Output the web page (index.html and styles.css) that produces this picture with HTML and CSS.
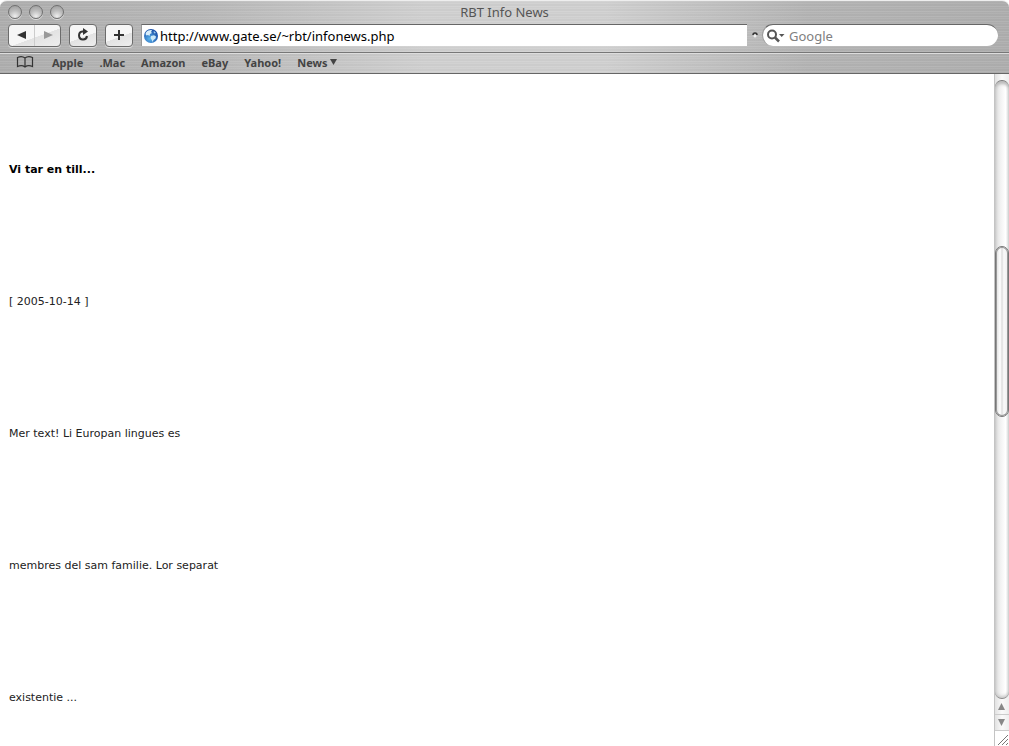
FILE: index.html
```html
<!DOCTYPE html>
<html lang="sv">
<head>
    <meta charset="UTF-8">
    <meta name="viewport" content="width=device-width, initial-scale=1.0">
    <title>RBT Info News</title>
    <link rel="stylesheet" href="styles.css">
</head>
<body>
    <div class="window">
        <header class="chrome">
            <div class="titleBar">
                <div class="lights">
                    <button type="button" class="light" aria-label="Close"></button>
                    <button type="button" class="light" aria-label="Minimize"></button>
                    <button type="button" class="light" aria-label="Zoom"></button>
                </div>
                <h1>RBT Info News</h1>
            </div>
            <form class="toolbar">
                <div class="navButtons">
                    <button type="button" class="navButton" aria-label="Back">
                        <svg width="10" height="10" viewBox="0 0 10 10"><path d="M9 1v8L0 5z" fill="#333"/></svg>
                    </button>
                    <button type="button" class="navButton" aria-label="Forward">
                        <svg width="10" height="10" viewBox="0 0 10 10"><path d="M1 1v8l9-4z" fill="#999"/></svg>
                    </button>
                </div>
                <button type="button" class="toolButton" aria-label="Reload">
                    <svg width="14" height="14" viewBox="0 0 14 14"><path d="M8 3.500H6.500A4 4 0 1 0 11 8" fill="none" stroke="#333" stroke-width="2"/><path d="M7 0l5 3.500L7 7z" fill="#333"/></svg>
                </button>
                <button type="button" class="toolButton" aria-label="Add bookmark">
                    <svg width="12" height="12" viewBox="0 0 12 12"><path d="M6 1v10M1 6h10" stroke="#333" stroke-width="2"/></svg>
                </button>
                <div class="address">
                    <svg width="14" height="14" viewBox="0 0 14 14">
                        <defs>
                            <radialGradient id="sea" cx="40%" cy="70%" r="65%">
                                <stop offset="0" stop-color="#5bb4ec"/>
                                <stop offset="1" stop-color="#1a50a8"/>
                            </radialGradient>
                        </defs>
                        <circle cx="7" cy="7" r="7" fill="url(#sea)"/>
                        <path d="M2 3.500C3.500 1.500 6 .8 8 1.200L7 3l1 1-2 1-.5 2L4 6 2.500 6.500 1.500 5z" fill="#d9eefa"/>
                        <path d="M7 7l3-.8 2 1.300-.5 2-2 1.500L8.500 13 7.500 10.500 6.500 9z" fill="#cbe8f8"/>
                        <path d="M10 2l2 2-1.500.5L9.500 3z" fill="#9fcdf0"/>
                    </svg>
                    <input type="text" class="addressInput" aria-label="Address" value="http://www.gate.se/~rbt/infonews.php">
                </div>
                <svg class="divider" width="6" height="6" viewBox="0 0 6 6"><path d="M1 3a2 2 0 0 1 4 0" fill="none" stroke="#333" stroke-width="1.500"/><circle cx="3" cy="4" r="1.500" fill="#eee"/></svg>
                <div class="search">
                    <svg width="18" height="14" viewBox="0 0 18 14"><circle cx="5" cy="5.500" r="4" fill="none" stroke="#555" stroke-width="2"/><path d="M8 8.500l4 4" stroke="#555" stroke-width="2.500"/><path d="M12 5h5.500L14.700 8z" fill="#555"/></svg>
                    <input type="text" class="searchInput" aria-label="Search Google" placeholder="Google">
                </div>
            </form>
            <nav class="bookmarks">
                <a href="#" class="book" aria-label="Bookmarks">
                    <svg width="18" height="12" viewBox="0 0 18 12"><path d="M9 2C7 .4 4 .4 1.500 1.500V10.500C4 9.500 7 9.500 9 11C11 9.500 14 9.500 16.500 10.500V1.500C14 .4 11 .4 9 2V11" fill="none" stroke="#333" stroke-width="1.200"/></svg>
                </a>
                <a href="#">Apple</a>
                <a href="#">.Mac</a>
                <a href="#">Amazon</a>
                <a href="#">eBay</a>
                <a href="#">Yahoo!</a>
                <a href="#">News <svg width="7" height="6" viewBox="0 0 7 6"><path d="M0 0h7L3.500 6z" fill="#444"/></svg></a>
            </nav>
        </header>
        <div class="view">
            <main class="page">
                <p><strong>Vi tar en till...</strong></p>
                <p>[ 2005-10-14 ]</p>
                <p>Mer text! Li Europan lingues es</p>
                <p>membres del sam familie. Lor separat</p>
                <p>existentie ...</p>
            </main>
            <div class="scrollbar">
                <div class="track">
                    <div class="thumb"></div>
                </div>
                <button type="button" class="arrow" aria-label="Scroll up">
                    <svg width="7" height="7" viewBox="0 0 7 7"><path d="M3.500 0L7 7H0z" fill="#888"/></svg>
                </button>
                <button type="button" class="arrow" aria-label="Scroll down">
                    <svg width="7" height="7" viewBox="0 0 7 7"><path d="M0 0h7L3.500 7z" fill="#888"/></svg>
                </button>
                <div class="grip">
                    <svg width="12" height="12" viewBox="0 0 12 12"><path d="M1 11L11 1M5 11l6-6M9 11l2-2" stroke="#777" stroke-width="1"/></svg>
                </div>
            </div>
        </div>
    </div>
</body>
</html>
```
FILE: styles.css
```css
* {
    margin: 0;
    padding: 0;
    box-sizing: border-box;
}

body {
    font-family: "Noto Sans", sans-serif;
    background: #fff;
    color: #222;
    height: 100vh;
    overflow: hidden;
}

svg {
    display: block;
    flex: none;
}

button {
    border: none;
    background: none;
}

.window {
    display: flex;
    flex-direction: column;
    height: 100%;
}

/* brushed metal */
.chrome {
    background:
        repeating-linear-gradient(rgba(255, 255, 255, 0.08) 0 1px, rgba(0, 0, 0, 0.01) 1px 2px, rgba(255, 255, 255, 0.04) 2px 3px, rgba(0, 0, 0, 0.02) 3px 5px),
        linear-gradient(90deg, #aeaeae, #b8b8b8 20%, #d0d0d0 42%, #d0d0d0 60%, #b4b4b4 80%, #aeaeae);
    border-top: 1px solid #eee;
    border-bottom: 1px solid #666;
    border-radius: 7px 7px 0 0;
}

.titleBar {
    display: grid;
    grid-template-columns: 1fr auto 1fr;
    align-items: center;
    height: 22px;
    padding: 0 8px;
}

.lights {
    display: flex;
    gap: 7px;
}

.light {
    width: 14px;
    height: 14px;
    border: 1px solid #707070;
    border-radius: 50%;
    background: radial-gradient(circle at 50% 85%, #eee, #bbb 50%, #999);
    box-shadow: 0 1px 0 #ddd;
}

h1 {
    font-size: 13px;
    line-height: 20px;
    font-weight: 400;
    color: #555;
}

.toolbar {
    display: flex;
    align-items: center;
    height: 29px;
    padding: 0 11px 5px 8px;
}

.navButtons,
.toolButton {
    height: 23px;
    border: 1px solid #6c6c6c;
    border-radius: 4px;
    background: linear-gradient(160deg, #f6f6f6 55%, #e2e2e2 56%, #eee);
    box-shadow: 0 1px 0 #ddd;
}

.navButtons {
    display: flex;
    width: 53px;
    margin-right: 8px;
}

.navButton,
.toolButton {
    display: flex;
    align-items: center;
    justify-content: center;
}

.navButton {
    flex: 1;
}

.navButton + .navButton {
    border-left: 1px solid #ccc;
}

.toolButton {
    width: 28px;
    margin-right: 8px;
}

.address {
    display: flex;
    flex: 1;
    align-items: center;
    gap: 2px;
    height: 22px;
    padding-left: 2px;
    background: #fff;
    border-top: 1px solid #666;
    border-left: 1px solid #999;
}

.addressInput,
.searchInput {
    flex: 1;
    min-width: 0;
    border: none;
    outline: none;
    background: none;
    font-family: inherit;
    font-size: 13px;
    line-height: 18px;
    color: #000;
}

.divider {
    margin: 0 4px 0 5px;
}

.search {
    display: flex;
    align-items: center;
    gap: 4px;
    width: 236px;
    height: 22px;
    padding: 0 8px 0 4px;
    background: #fff;
    border-top: 1px solid #666;
    border-left: 1px solid #999;
    border-radius: 11px;
}

.searchInput::placeholder {
    color: #808080;
    opacity: 1;
}

.bookmarks {
    display: flex;
    align-items: center;
    gap: 16px;
    height: 21px;
    padding: 0 16px 2px;
    border-top: 1px solid #777;
    box-shadow: inset 0 1px 0 #ddd;
}

.bookmarks a {
    display: flex;
    align-items: center;
    gap: 3px;
    font-size: 11px;
    font-weight: 700;
    color: #444;
    text-decoration: none;
}

.bookmarks .book {
    margin-right: 2px;
}

.view {
    display: flex;
    flex: 1;
    min-height: 0;
}

.page {
    flex: 1;
    padding: 30px 9px 0;
    overflow: hidden;
    font-family: "DejaVu Sans", sans-serif;
    font-size: 11px;
    line-height: 132px;
}

.page strong {
    color: #000;
}

.scrollbar {
    display: flex;
    flex-direction: column;
    width: 15px;
    padding-top: 6px;
    border-left: 1px solid #c4c4c4;
    background: linear-gradient(90deg, #e2e2e2, #fafafa 50%, #eee);
}

/* rows: above the thumb, the thumb, below it */
.track {
    display: grid;
    grid-template-rows: 27fr 28fr 46fr;
    flex: 1;
    border-top: 1px solid #777;
    border-bottom: 1px solid #888;
    border-radius: 7px;
    background: linear-gradient(90deg, #dadada, #f2f2f2 40%, #fff 75%, #e8e8e8);
    box-shadow: inset 0 3px 3px #bbb, inset 0 -2px 3px #ccc;
}

.thumb {
    grid-row: 2;
    border: 1px solid #777;
    border-radius: 7px;
    background: linear-gradient(90deg, #ddd, #fff 35%, #ddd 50%, #fafafa 65%, #eee);
    box-shadow: inset 0 0 0 1px #999;
}

.arrow {
    display: flex;
    align-items: center;
    justify-content: center;
    height: 16px;
    padding-right: 1px;
    border-bottom: 1px solid #ccc;
}

.grip {
    display: flex;
    align-items: flex-end;
    justify-content: flex-end;
    height: 15px;
    background: #fff;
}
```
